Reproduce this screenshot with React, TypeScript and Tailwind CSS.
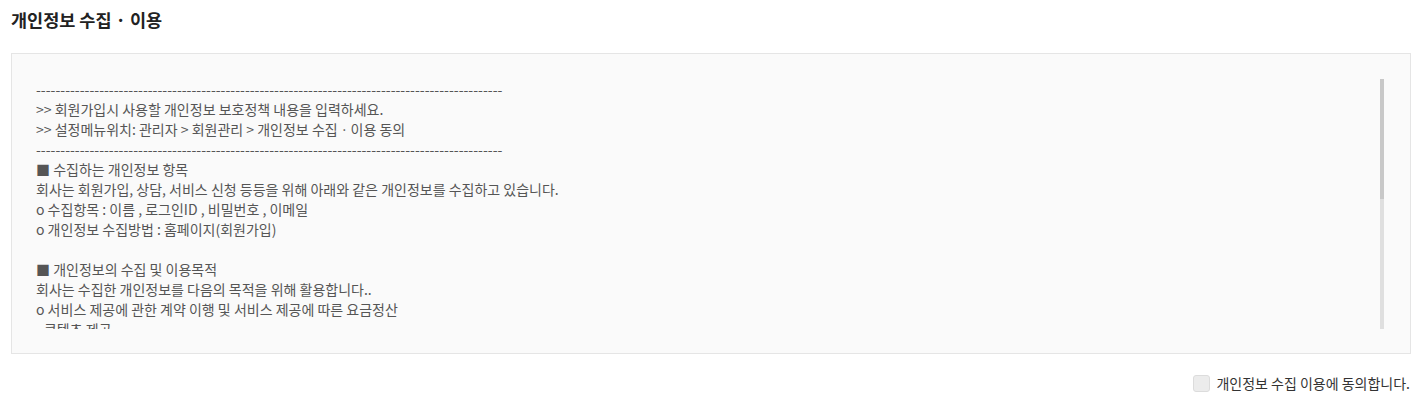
import React from "react";

const lines = [
  "-".repeat(96),
  ">> 회원가입시 사용할 개인정보 보호정책 내용을 입력하세요.",
  ">> 설정메뉴위치: 관리자 > 회원관리 > 개인정보 수집ㆍ이용 동의",
  "-".repeat(96),
  "■ 수집하는 개인정보 항목",
  "회사는 회원가입, 상담, 서비스 신청 등등을 위해 아래와 같은 개인정보를 수집하고 있습니다.",
  "o 수집항목 : 이름 , 로그인ID , 비밀번호 , 이메일",
  "o 개인정보 수집방법 : 홈페이지(회원가입)",
  "",
  "■ 개인정보의 수집 및 이용목적",
  "회사는 수집한 개인정보를 다음의 목적을 위해 활용합니다..",
  "o 서비스 제공에 관한 계약 이행 및 서비스 제공에 따른 요금정산",
  "- 콘텐츠 제공",
  "o 회원 관리",
  "- 회원제 서비스 이용에 따른 본인확인 , 개인 식별 , 가입 의사 확인",
];

export default function App() {
  return (
    <div
      className="bg-white px-[11px] pr-[12px] pt-[8px]"
      style={{ fontFamily: '"Noto Sans CJK KR", "Noto Sans", sans-serif' }}
    >
      <h2 className="text-[17.5px] font-bold leading-[24px] text-[#222]">
        개인정보 수집 · 이용
      </h2>

      <div className="mt-[21px] flex border border-[#e5e5e5] bg-[#fafafa] pb-[24px] pl-[24px] pr-[26px] pt-[25px]">
        <div className="h-[250px] flex-1 overflow-hidden text-[14px] leading-[20px] text-[#555]">
          {lines.map((l, i) => (
            <div key={i} className="h-[20px] whitespace-pre">
              {l}
            </div>
          ))}
        </div>
        <div className="h-[250px] w-[4px] bg-[#dfdfdf]">
          <div className="h-[120px] w-[4px] bg-[#c8c8c8]" />
        </div>
      </div>

      <div className="mt-[20px] flex items-center justify-end gap-[6px] pr-[1px]">
        <span className="h-[17px] w-[17px] rounded-[3px] border border-[#dcdcdc] bg-[#ececec]" />
        <span className="text-[14px] leading-[18px] text-[#333]">
          개인정보 수집 이용에 동의합니다.
        </span>
      </div>
    </div>
  );
}
